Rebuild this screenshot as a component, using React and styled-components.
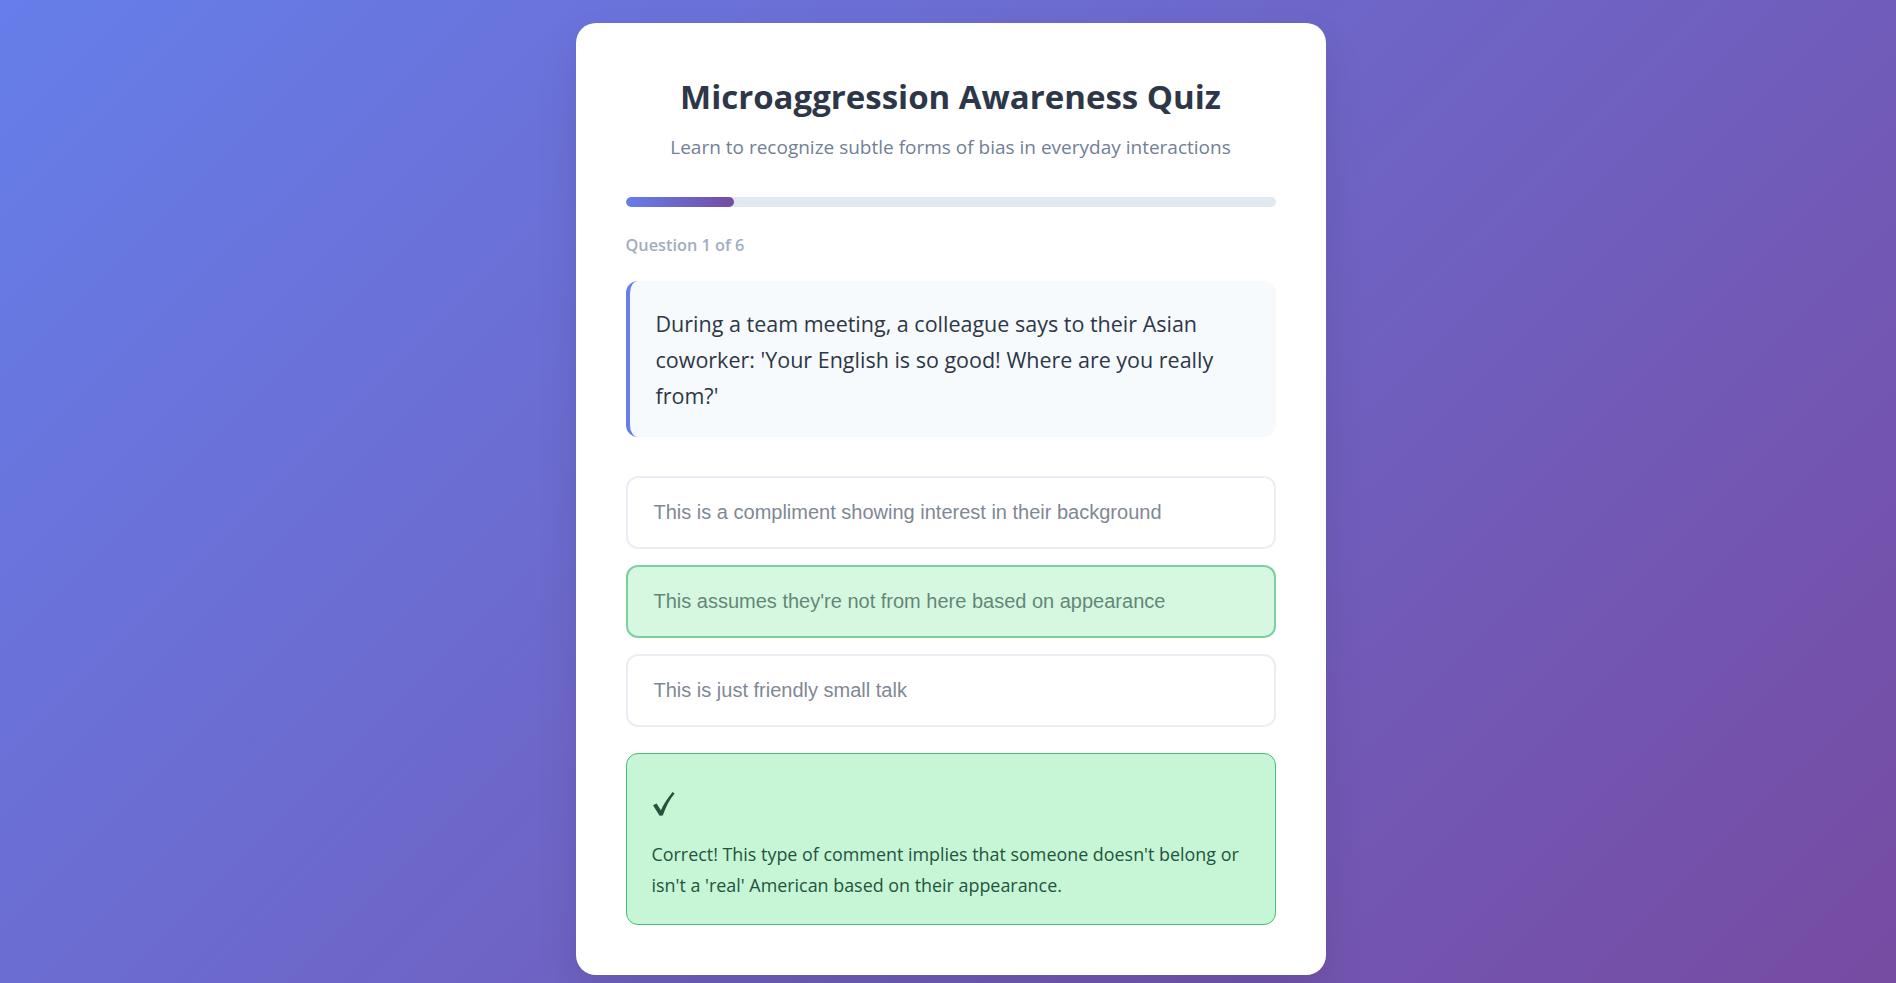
import React from 'react';
import styled, { createGlobalStyle } from 'styled-components';

const GlobalStyle = createGlobalStyle`
  * { box-sizing: border-box; }
  body {
    margin: 0;
    font-family: 'Open Sans', 'Noto Sans', sans-serif;
    background: linear-gradient(135deg, #667eea 0%, #764ba2 100%);
    min-height: 100vh;
  }
`;

const Page = styled.div`
  min-height: 100vh;
  display: flex;
  justify-content: center;
  align-items: flex-start;
  padding: 23px 17px 8px 22px;
`;

const Card = styled.div`
  width: 750px;
  background: #ffffff;
  border-radius: 20px;
  padding: 50px;
  box-shadow: 0 20px 40px rgba(0, 0, 0, 0.1);
`;

const Header = styled.header`
  text-align: center;
  margin-bottom: 36px;
`;

const Title = styled.h1`
  margin: 0 0 12px;
  font-size: 33px;
  line-height: 48px;
  font-weight: 700;
  color: #2d3748;
`;

const Subtitle = styled.p`
  margin: 0;
  font-size: 19px;
  line-height: 28px;
  color: #718096;
`;

const ProgressTrack = styled.div`
  height: 10px;
  background: #e2e8f0;
  border-radius: 5px;
  overflow: hidden;
  margin-bottom: 26px;
`;

const ProgressFill = styled.div`
  height: 100%;
  border-radius: 5px;
  background: linear-gradient(90deg, #667eea, #764ba2);
`;

const QuestionLabel = styled.div`
  font-size: 16.3px;
  line-height: 24px;
  font-weight: 600;
  color: #a0aec0;
  margin-bottom: 24px;
`;

const QuestionBox = styled.div`
  background: #f7fafc;
  border-left: 4px solid #667eea;
  border-radius: 12px;
  padding: 25px 25px 23px 26px;
  font-size: 21.5px;
  line-height: 36px;
  color: #2d3748;
  margin-bottom: 39px;
`;

const Options = styled.div`
  display: flex;
  flex-direction: column;
  gap: 16px;
`;

const Option = styled.button`
  display: block;
  width: 100%;
  text-align: left;
  font-family: 'Liberation Sans', Arial, sans-serif;
  font-size: 20px;
  line-height: 23px;
  padding: 23px 26px;
  border-radius: 12px;
  border: 2px solid ${p => (p.$correct ? '#48bb78' : '#e2e8f0')};
  background: ${p => (p.$correct ? '#c6f6d5' : '#ffffff')};
  color: ${p => (p.$correct ? '#22543d' : '#4a5568')};
  opacity: 0.7;
  cursor: not-allowed;
`;

const Feedback = styled.div`
  margin-top: 26px;
  background: #c6f6d5;
  border: 1px solid #48bb78;
  border-radius: 12px;
  padding: 25px 25px 24px;
  color: #22543d;
`;

const FeedbackIcon = styled.div`
  height: 50px;
  display: flex;
  align-items: center;
  margin-bottom: 10px;
`;

const FeedbackText = styled.p`
  margin: 0;
  font-size: 17.9px;
  line-height: 30.5px;
`;

const CheckMark = () => (
  <svg width="23" height="26" viewBox="0 0 23 26" aria-label="✓">
    <path
      d="M1 14.2 L4.6 12.4 L8.9 19.2 C12 12.5 16 6.5 20.6 1 L22.6 2.4 C17.6 8.6 13.6 15.8 10.8 24.6 L7.6 24.8 Z"
      fill="#22543d"
    />
  </svg>
);

const options = [
  { text: 'This is a compliment showing interest in their background' },
  { text: "This assumes they're not from here based on appearance", correct: true },
  { text: 'This is just friendly small talk' },
];

const App = () => {
  const current = 1;
  const total = 6;
  return (
    <>
      <GlobalStyle />
      <Page>
        <Card>
          <Header>
            <Title>Microaggression Awareness Quiz</Title>
            <Subtitle>Learn to recognize subtle forms of bias in everyday interactions</Subtitle>
          </Header>
          <ProgressTrack>
            <ProgressFill style={{ width: `${(current / total) * 100}%` }} />
          </ProgressTrack>
          <QuestionLabel>Question {current} of {total}</QuestionLabel>
          <QuestionBox>
            During a team meeting, a colleague says to their Asian coworker: 'Your English is so good! Where are you really from?'
          </QuestionBox>
          <Options>
            {options.map(o => (
              <Option key={o.text} $correct={o.correct} disabled>
                {o.text}
              </Option>
            ))}
          </Options>
          <Feedback>
            <FeedbackIcon>
              <CheckMark />
            </FeedbackIcon>
            <FeedbackText>
              Correct! This type of comment implies that someone doesn't belong or isn't a 'real' American based on their appearance.
            </FeedbackText>
          </Feedback>
        </Card>
      </Page>
    </>
  );
};

export default App;
